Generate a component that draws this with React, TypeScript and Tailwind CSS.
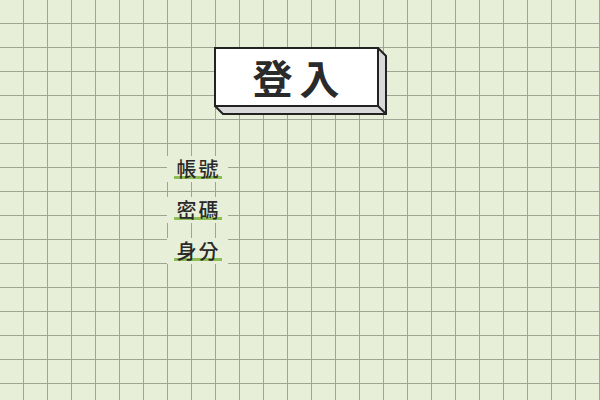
import React from "react";

const labels = ["帳號", "密碼", "身分"];

function TitleBox() {
  return (
    <div className="relative w-[173px] h-[68px]">
      {/* extruded side faces */}
      <svg className="absolute left-0 top-0" width="173" height="68" viewBox="0 0 173 68">
        <polygon
          points="164,1 172,9 172,67 9,67 1,59 164,59"
          fill="#d9d9d9"
          stroke="#222222"
          strokeWidth="2"
        />
        <line x1="164" y1="59" x2="172" y2="67" stroke="#222222" strokeWidth="2" />
      </svg>
      <div className="relative flex h-[60px] w-[165px] items-center justify-center border-2 border-[#222222] bg-white">
        <span className="pl-[7px] text-[40px] font-bold leading-none tracking-[7px] text-[#2a2a2a]">登入</span>
      </div>
    </div>
  );
}

export default function App() {
  return (
    <div
      className="h-[400px] w-full bg-[#e8efd8] bg-[linear-gradient(to_right,transparent_23px,#9ea592_23px),linear-gradient(to_bottom,transparent_23px,#9ea592_23px)] bg-[size:24px_24px] font-['Noto_Sans_CJK_TC','Noto_Sans',sans-serif]"
    >
      <div className="flex flex-col items-center pt-[47px]">
        <TitleBox />
      </div>
      <div className="ml-[167px] mt-[41px] flex flex-col gap-[15px]">
        {labels.map((l) => (
          <div key={l} className="flex w-[61px] justify-center bg-[#e8efd8] py-[3px]">
            <span className="px-px pl-[3px] text-[20px] font-medium leading-5 tracking-[2px] text-[#2a2a2a] shadow-[inset_0_-3px_0_#8dbd54]">
              {l}
            </span>
          </div>
        ))}
      </div>
    </div>
  );
}
